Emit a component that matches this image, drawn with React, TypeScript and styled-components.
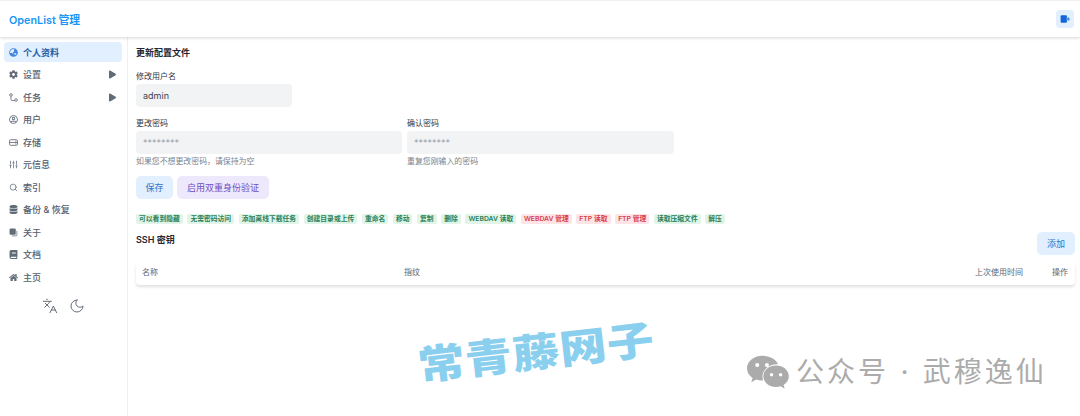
import React from 'react';
import styled, { createGlobalStyle } from 'styled-components';
import { FaCog, FaDatabase, FaHome, FaBook, FaGlobeAsia, FaRegUserCircle, FaPlay } from 'react-icons/fa';
import { LuLanguages, LuMoon, LuSlidersVertical, LuSearch } from 'react-icons/lu';

const font = `"Inter", "Noto Sans CJK SC", "Noto Sans", sans-serif`;

const GlobalStyle = createGlobalStyle`
  html, body {
    margin: 0;
    padding: 0;
    background: #fff;
    font-family: ${font};
    overflow: hidden;
  }
  * { box-sizing: border-box; }
`;

const Page = styled.div`
  width: 1080px;
  height: 416px;
  position: relative;
  overflow: hidden;
  display: flex;
  flex-direction: column;
`;

const Header = styled.header`
  height: 37px;
  flex: none;
  display: flex;
  align-items: center;
  justify-content: space-between;
  padding: 0 6px 0 9px;
  border-top: 1px solid #f1f1f1;
  box-shadow: 0 1px 3px rgba(0, 0, 0, 0.16);
  position: relative;
`;

const Brand = styled.div`
  color: #1a96f5;
  font-size: 10.8px;
  font-weight: 600;
`;

const LogoutButton = styled.button`
  width: 18px;
  height: 18px;
  padding: 0;
  border: 0;
  border-radius: 4px;
  background: #e1efff;
  display: flex;
  align-items: center;
  justify-content: center;
`;

const Body = styled.div`
  flex: 1;
  display: flex;
  min-height: 0;
`;

const Sidebar = styled.nav`
  width: 128px;
  flex: none;
  padding: 5px 5px 0 4px;
  border-right: 1px solid #f0f0f2;
`;

const NavItem = styled.div<{ $active?: boolean }>`
  height: 20px;
  margin-bottom: 2.55px;
  display: flex;
  align-items: center;
  padding: 0 5px;
  gap: 5px;
  border-radius: 4px;
  font-size: 9px;
  font-weight: ${(p) => (p.$active ? 600 : 500)};
  color: ${(p) => (p.$active ? '#1f5fa8' : '#56606e')};
  background: ${(p) => (p.$active ? '#e1efff' : 'transparent')};
  svg {
    width: 9px;
    height: 9px;
    flex: none;
    color: ${(p) => (p.$active ? '#3f86df' : '#626b78')};
  }
`;

const NavLabel = styled.span`
  flex: 1;
`;

const Caret = styled(FaPlay)`
  && {
    width: 7px;
    height: 9px;
    margin-right: 1px;
    color: #626b78;
  }
`;

const SidebarTools = styled.div`
  display: flex;
  justify-content: center;
  gap: 11px;
  padding-top: 8px;
  color: #666e7a;
  font-size: 16px;
`;

const Main = styled.main`
  flex: 1;
  padding: 8px 5px 0 8px;
  min-width: 0;
`;

const Title = styled.h2`
  margin: 0;
  height: 15px;
  line-height: 15px;
  font-size: 9px;
  font-weight: 600;
  color: #1f2530;
`;

const Field = styled.div<{ $width: number }>`
  width: ${(p) => p.$width}px;
  flex: none;
`;

const Label = styled.div`
  font-size: 8px;
  line-height: 12px;
  height: 12px;
  margin-bottom: 2px;
  color: #2f3744;
`;

const Input = styled.div<{ $placeholder?: boolean }>`
  height: 23px;
  border-radius: 4px;
  background: #f1f3f5;
  display: flex;
  align-items: center;
  padding: 0 7px;
  font-size: 9px;
  color: ${(p) => (p.$placeholder ? '#9aa1aa' : '#3b4350')};
`;

const Help = styled.div`
  margin-top: 2px;
  font-size: 7.9px;
  line-height: 11px;
  color: #7a828d;
`;

const PasswordRow = styled.div`
  display: flex;
  gap: 5px;
  margin-top: 10px;
`;

const UserRow = styled.div`
  margin-top: 10px;
`;

const ButtonRow = styled.div`
  display: flex;
  gap: 4px;
  margin-top: 9px;
`;

const Button = styled.button<{ $tone: 'blue' | 'purple'; $width: number }>`
  height: 23px;
  width: ${(p) => p.$width}px;
  padding: 0;
  border: 0;
  border-radius: 5px;
  font-family: ${font};
  font-size: 9px;
  background: ${(p) => (p.$tone === 'blue' ? '#e1efff' : '#eee8fd')};
  color: ${(p) => (p.$tone === 'blue' ? '#2f74c9' : '#6d4fc0')};
`;

const Tags = styled.div`
  display: flex;
  gap: 4.6px;
  margin-top: 15px;
`;

const Tag = styled.span<{ $danger?: boolean }>`
  height: 10px;
  line-height: 10px;
  padding: 0 3px;
  border-radius: 2px;
  font-size: 6.8px;
  font-weight: 600;
  white-space: nowrap;
  background: ${(p) => (p.$danger ? '#fde4e6' : '#e0f5e8')};
  color: ${(p) => (p.$danger ? '#d8404f' : '#2c8058')};
`;

const SshHead = styled.div`
  display: flex;
  justify-content: space-between;
  align-items: flex-start;
  margin-top: 8px;
`;

const SshTitle = styled(Title)`
  height: 14px;
  line-height: 14px;
  margin-top: 1px;
`;

const Table = styled.div`
  margin-top: 7px;
  height: 23px;
  width: 939px;
  border-radius: 4px;
  box-shadow: 0 2px 3px rgba(0, 0, 0, 0.12);
  display: grid;
  grid-template-columns: 262px 571px 77px 1fr;
  align-items: center;
  padding: 0 8px 4px 6px;
  font-size: 8px;
  color: #5b6470;
  white-space: nowrap;
`;

const Watermark = styled.div`
  position: absolute;
  left: 418px;
  top: 341px;
  font-size: 47px;
  line-height: 50px;
  font-weight: 900;
  letter-spacing: 0.5px;
  color: #8ad0ee;
  white-space: nowrap;
  transform: rotate(-6.5deg) scaleY(0.85);
  transform-origin: left center;
`;

const Account = styled.div`
  position: absolute;
  left: 747px;
  top: 352px;
  display: flex;
  align-items: center;
  gap: 7px;
  color: #ababab;
  font-size: 28px;
  line-height: 40px;
  letter-spacing: 3px;
  word-spacing: 0.5px;
`;

const RouteIcon = () => (
  <svg viewBox="0 0 16 16" fill="none" stroke="currentColor" strokeWidth="1.5">
    <circle cx="3.500" cy="3.500" r="2.300" />
    <circle cx="12.500" cy="12.500" r="2.300" />
    <path d="M3.500 6v5.500a2 2 0 0 0 2 2H10" />
  </svg>
);

const StorageIcon = () => (
  <svg viewBox="0 0 16 16" fill="none" stroke="currentColor" strokeWidth="1.5">
    <rect x="1" y="3" width="14" height="10" rx="2" />
    <path d="M1 8h14M11 5.500h2M11 10.500h2" />
  </svg>
);

const AboutIcon = () => (
  <svg viewBox="0 0 16 16" fill="currentColor">
    <rect x="1" y="1" width="11" height="11" rx="2" />
    <path d="M14 5v8a1 1 0 0 1-1 1H5" fill="none" stroke="currentColor" strokeWidth="1.300" />
  </svg>
);

const LogoutIcon = () => (
  <svg width="10" height="10" viewBox="0 0 16 16" fill="#1565d8">
    <rect x="1" y="2" width="10" height="12" rx="1.500" />
    <path d="M10 6.500h2.500V4l3.500 4-3.500 4V9.500H10z" fill="#4b92e8" />
  </svg>
);

const nav = [
  { icon: <FaGlobeAsia />, label: '个人资料', active: true },
  { icon: <FaCog />, label: '设置', caret: true },
  { icon: <RouteIcon />, label: '任务', caret: true },
  { icon: <FaRegUserCircle />, label: '用户' },
  { icon: <StorageIcon />, label: '存储' },
  { icon: <LuSlidersVertical />, label: '元信息' },
  { icon: <LuSearch />, label: '索引' },
  { icon: <FaDatabase />, label: '备份 & 恢复' },
  { icon: <AboutIcon />, label: '关于' },
  { icon: <FaBook />, label: '文档' },
  { icon: <FaHome />, label: '主页' },
];

const tags: { text: string; danger?: boolean }[] = [
  { text: '可以看到隐藏' },
  { text: '无需密码访问' },
  { text: '添加离线下载任务' },
  { text: '创建目录或上传' },
  { text: '重命名' },
  { text: '移动' },
  { text: '复制' },
  { text: '删除' },
  { text: 'WEBDAV 读取' },
  { text: 'WEBDAV 管理', danger: true },
  { text: 'FTP 读取', danger: true },
  { text: 'FTP 管理', danger: true },
  { text: '读取压缩文件' },
  { text: '解压' },
];

const WeChatLogo = () => (
  <svg width="42" height="35" viewBox="1 1 39 31" fill="#ababab">
    <path d="M15 1C7.3 1 1 6.200 1 12.600c0 3.600 2 6.800 5.200 9l-1.200 4 4.600-2.500c1.700.5 3.500.8 5.400.8h1c-.4-1.200-.6-2.400-.6-3.600 0-6.400 6-11.500 13.400-11.500h1C28.400 4.600 22.200 1 15 1z" />
    <path d="M39.800 20c0-5.600-5.300-10-11.800-10S16.200 14.400 16.200 20 21.500 30 28 30c1.500 0 2.900-.2 4.200-.7l3.800 2.200-1-3.400c2.900-1.800 4.800-4.700 4.800-8.100z" />
    <circle cx="10.500" cy="9.500" r="1.900" fill="#fff" />
    <circle cx="19.500" cy="9.500" r="1.900" fill="#fff" />
    <circle cx="23.800" cy="18.500" r="1.600" fill="#fff" />
    <circle cx="32.200" cy="18.500" r="1.600" fill="#fff" />
  </svg>
);

const App = () => (
  <>
    <GlobalStyle />
    <Page>
      <Header>
        <Brand>OpenList 管理</Brand>
        <LogoutButton aria-label="退出">
          <LogoutIcon />
        </LogoutButton>
      </Header>
      <Body>
        <Sidebar>
          {nav.map((item) => (
            <NavItem key={item.label} $active={item.active}>
              {item.icon}
              <NavLabel>{item.label}</NavLabel>
              {item.caret && <Caret />}
            </NavItem>
          ))}
          <SidebarTools>
            <LuLanguages strokeWidth={1.5} />
            <LuMoon strokeWidth={1.5} />
          </SidebarTools>
        </Sidebar>
        <Main>
          <Title>更新配置文件</Title>
          <UserRow>
            <Field $width={156}>
              <Label>修改用户名</Label>
              <Input>admin</Input>
            </Field>
          </UserRow>
          <PasswordRow>
            <Field $width={266}>
              <Label>更改密码</Label>
              <Input $placeholder>********</Input>
              <Help>如果您不想更改密码，请保持为空</Help>
            </Field>
            <Field $width={267}>
              <Label>确认密码</Label>
              <Input $placeholder>********</Input>
              <Help>重复您刚输入的密码</Help>
            </Field>
          </PasswordRow>
          <ButtonRow>
            <Button $tone="blue" $width={37}>保存</Button>
            <Button $tone="purple" $width={92}>启用双重身份验证</Button>
          </ButtonRow>
          <Tags>
            {tags.map((tag) => (
              <Tag key={tag.text} $danger={tag.danger}>{tag.text}</Tag>
            ))}
          </Tags>
          <SshHead>
            <SshTitle>SSH 密钥</SshTitle>
            <Button $tone="blue" $width={38}>添加</Button>
          </SshHead>
          <Table>
            <span>名称</span>
            <span>指纹</span>
            <span>上次使用时间</span>
            <span>操作</span>
          </Table>
        </Main>
      </Body>
      <Watermark>常青藤网子</Watermark>
      <Account>
        <WeChatLogo />
        公众号 · 武穆逸仙
      </Account>
    </Page>
  </>
);

export default App;
